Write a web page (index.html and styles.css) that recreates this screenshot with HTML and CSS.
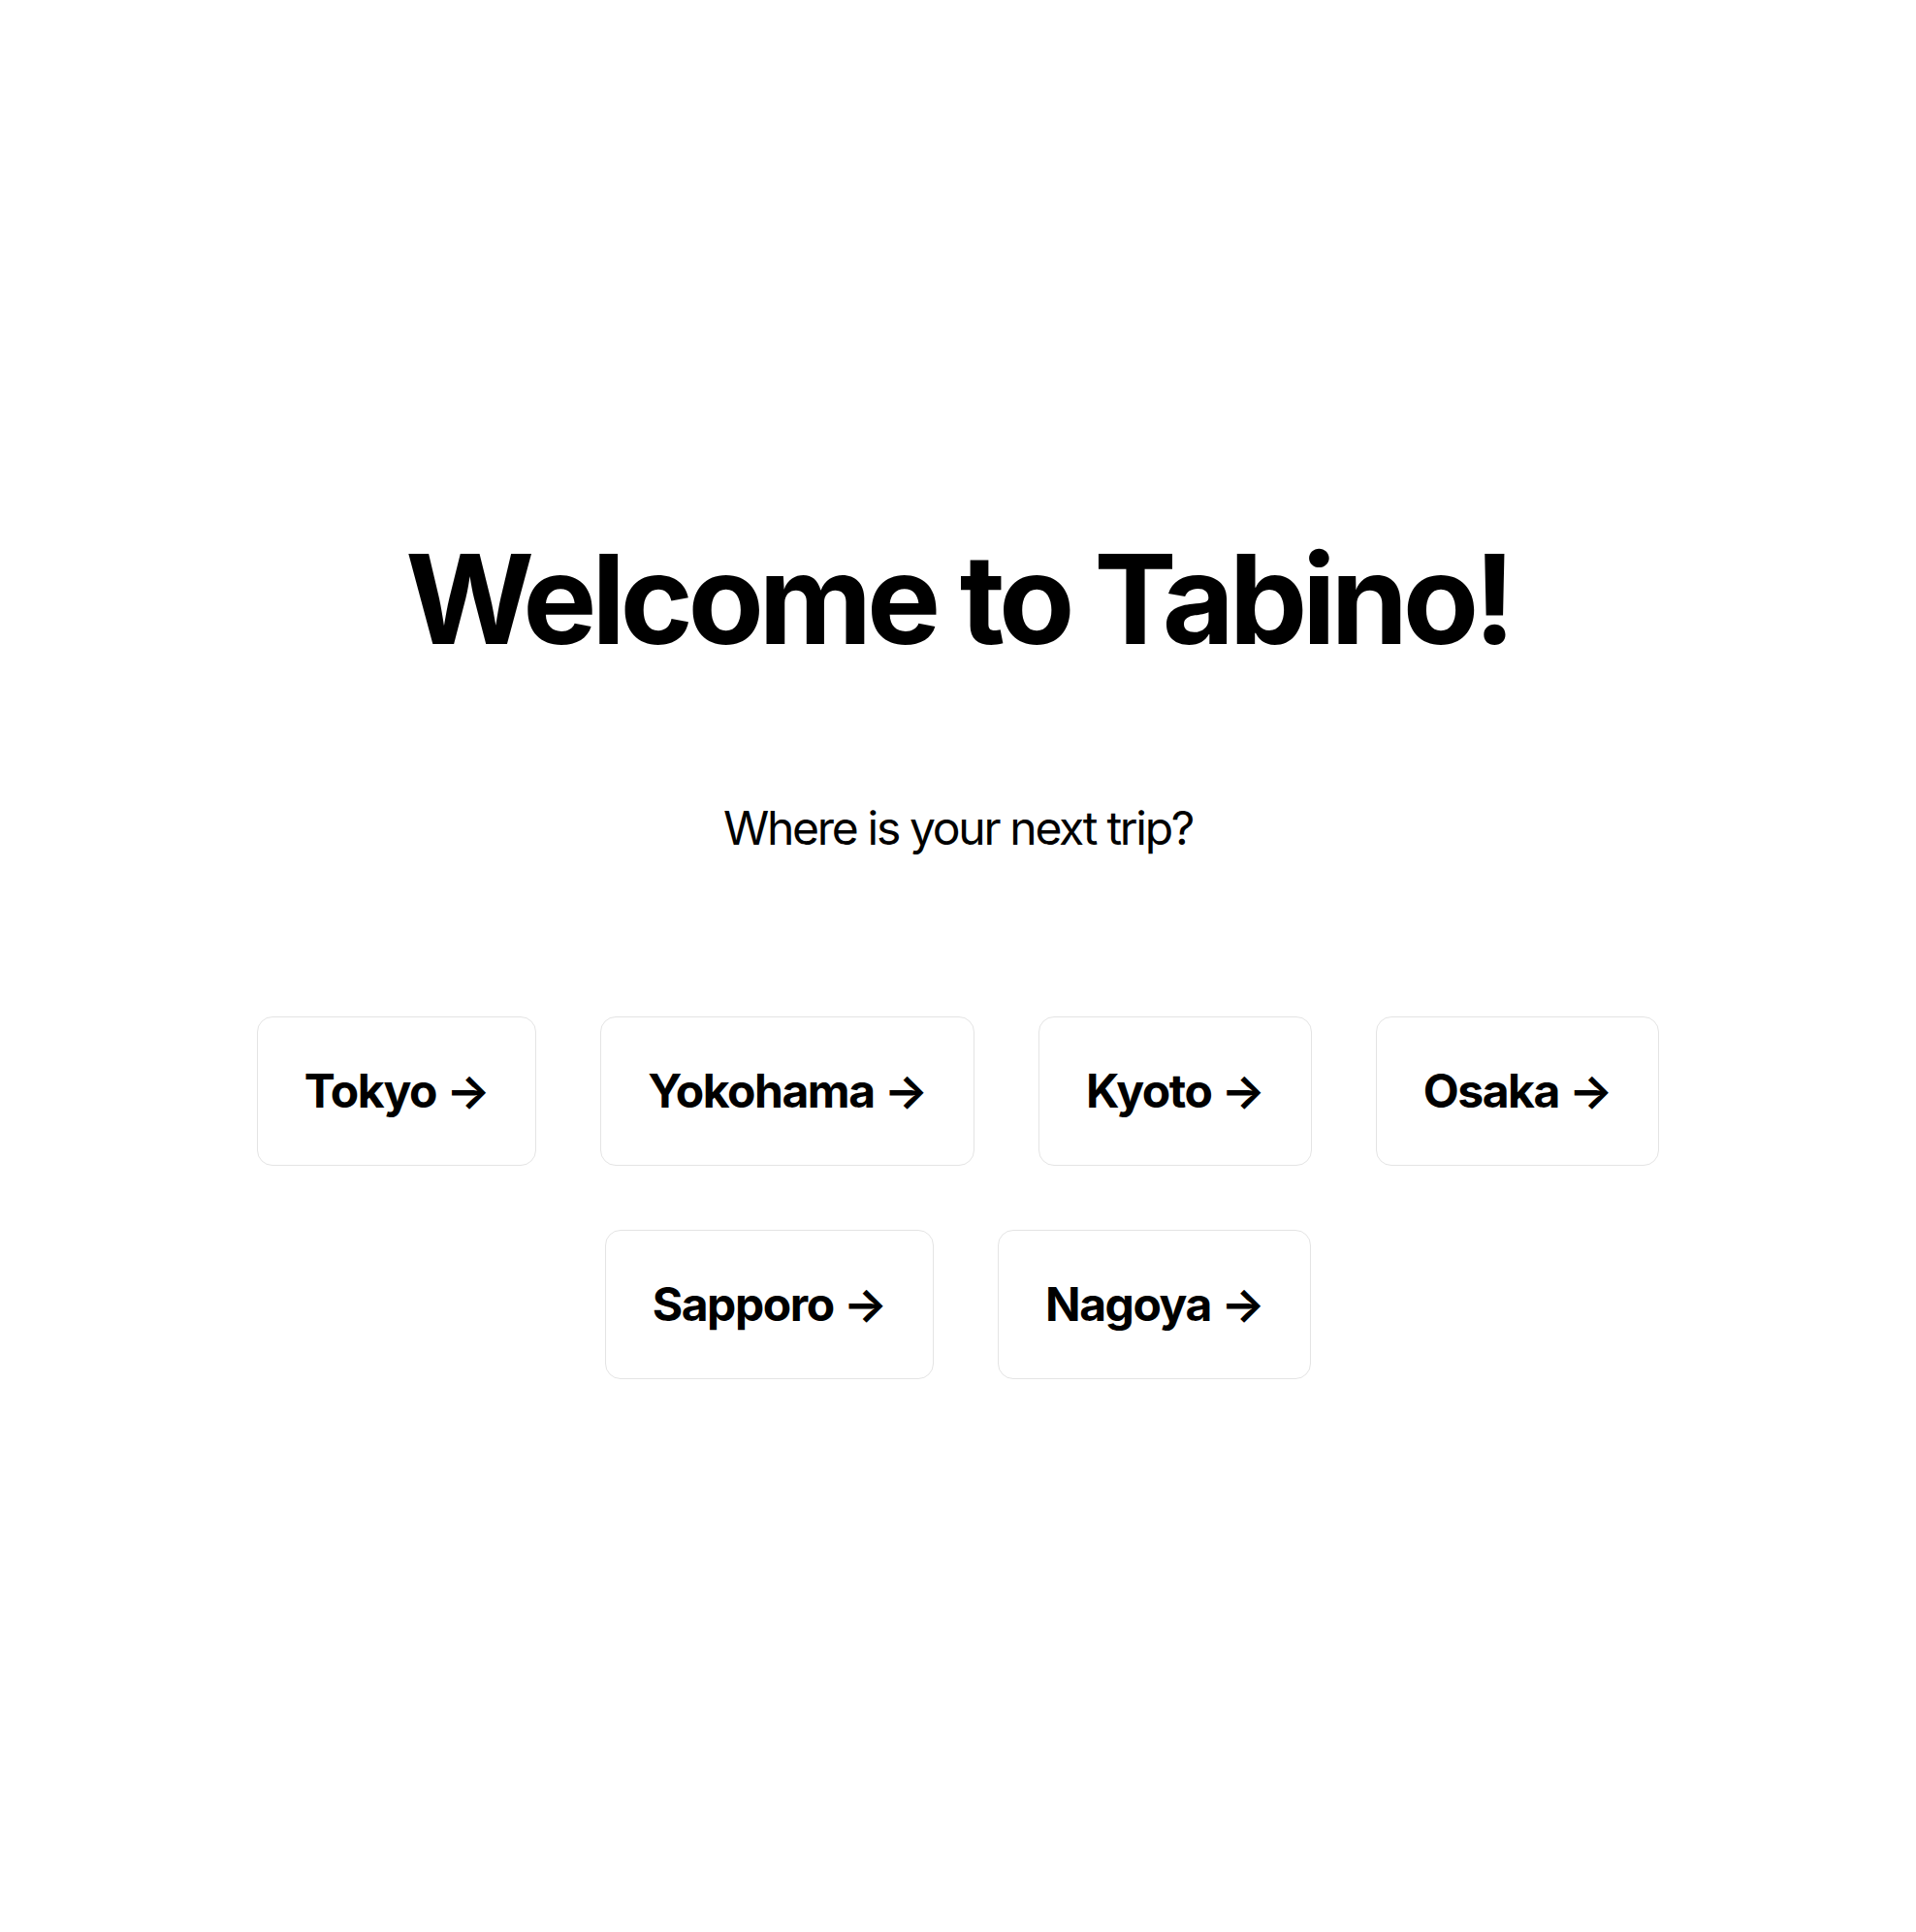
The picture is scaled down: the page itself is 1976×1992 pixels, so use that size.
FILE: index.html
```html
<!DOCTYPE html>
<html lang="en">
<head>
<meta charset="utf-8">
<title>Tabino</title>
<link rel="stylesheet" href="styles.css">
</head>
<body>
<main class="welcome">
  <h1 class="title">Welcome to Tabino!</h1>
  <p class="subtitle">Where is your next trip?</p>
  <nav class="cities">
    <a class="city" href="#">Tokyo →</a>
    <a class="city" href="#">Yokohama →</a>
    <a class="city" href="#">Kyoto →</a>
    <a class="city" href="#">Osaka →</a>
    <a class="city" href="#">Sapporo →</a>
    <a class="city" href="#">Nagoya →</a>
  </nav>
</main>
</body>
</html>
```

FILE: styles.css
```css
html, body {
  margin: 0;
  padding: 0;
  background: #ffffff;
}

body {
  font-family: Inter, "Noto Sans", "Liberation Sans", sans-serif;
  color: #000000;
}

.welcome {
  display: flex;
  flex-direction: column;
  align-items: center;
  padding-top: 541px;
}

.title {
  margin: 0;
  font-size: 128px;
  line-height: 1.2;
  font-weight: 700;
  letter-spacing: -0.042em;
}

.subtitle {
  margin: 123px 0 0;
  font-size: 48px;
  line-height: 1.5;
  font-weight: 400;
  letter-spacing: -0.048em;
}

.cities {
  margin-top: 158px;
  max-width: 1536px;
  display: flex;
  flex-wrap: wrap;
  justify-content: center;
  gap: 66px;
}

.city {
  display: block;
  padding: 40px 48px;
  border: 1px solid #e4e4e4;
  border-radius: 16px;
  font-size: 48px;
  line-height: 1.5;
  font-weight: 700;
  color: #000000;
  text-decoration: none;
  letter-spacing: -0.03em;
}
```
